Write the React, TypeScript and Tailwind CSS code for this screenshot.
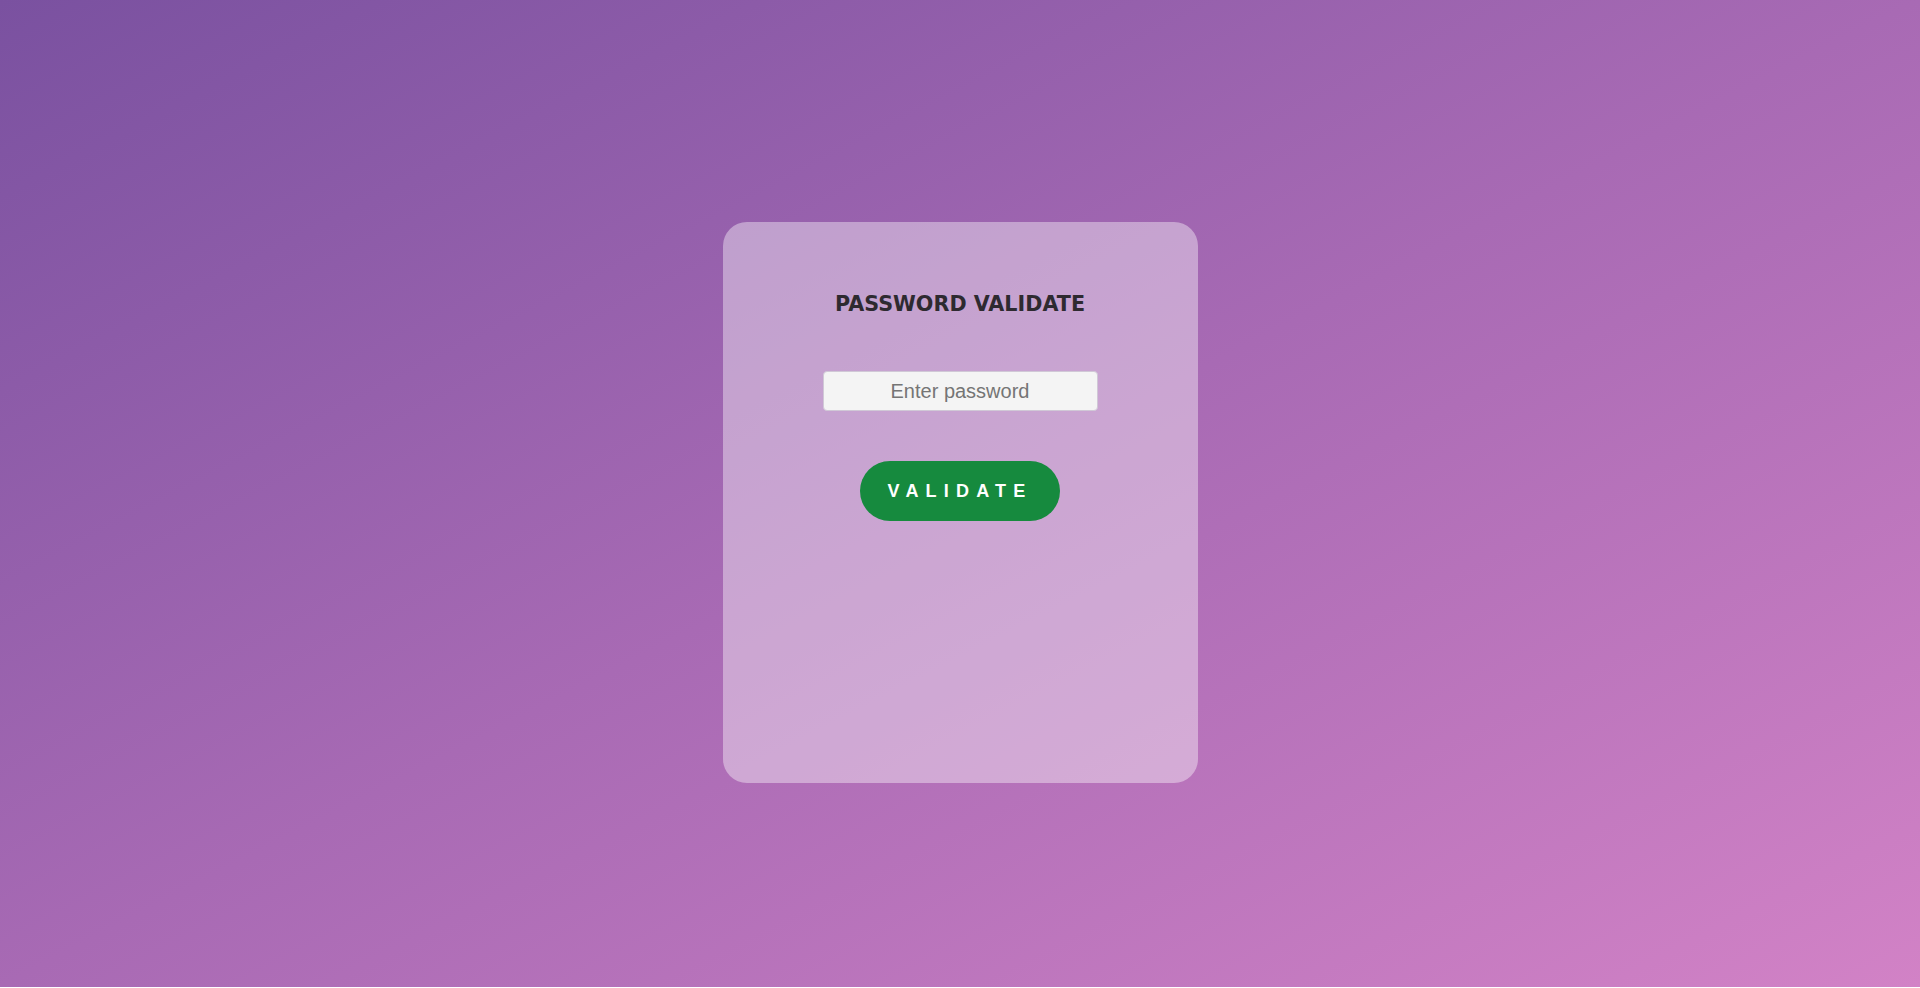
import React, { useState } from 'react';

function App() {
  const [password, setPassword] = useState('');
  return (
    <main className="w-full h-[987px] flex justify-center items-start pt-[222px] bg-linear-to-br from-[#7a51a0] via-[#a86ab4] to-[#d282c6]">
      <div className="w-[475px] h-[561px] rounded-3xl bg-white/40 flex flex-col items-center pt-[70px]">
        <h1 className="text-[20.7px] leading-[24px] font-bold text-[#2e2a30] font-['Verdana','DejaVu_Sans',sans-serif]">
          PASSWORD VALIDATE
        </h1>
        <input
          type="password"
          value={password}
          onChange={(e) => setPassword(e.target.value)}
          placeholder="Enter password"
          className="mt-[55px] w-[275px] h-10 rounded border border-[#d0c8d6] bg-[#f4f4f4] text-center text-xl text-[#555] placeholder:text-[#757575] outline-none font-['Liberation_Sans',Arial,sans-serif]"
        />
        <button className="mt-[50px] w-[200px] h-[60px] rounded-full bg-[#168a3e] text-white text-lg font-bold tracking-[0.4em] font-['Liberation_Sans',Arial,sans-serif]">
          VALIDATE
        </button>
      </div>
    </main>
  );
}

export default App;
